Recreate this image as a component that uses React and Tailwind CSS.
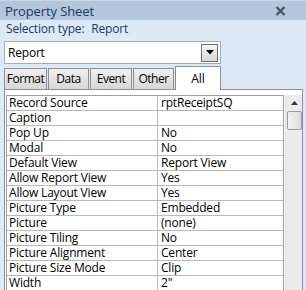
import React from "react";

const rows = [
  ["Record Source", "rptReceiptSQ"],
  ["Caption", ""],
  ["Pop Up", "No"],
  ["Modal", "No"],
  ["Default View", "Report View"],
  ["Allow Report View", "Yes"],
  ["Allow Layout View", "Yes"],
  ["Picture Type", "Embedded"],
  ["Picture", "(none)"],
  ["Picture Tiling", "No"],
  ["Picture Alignment", "Center"],
  ["Picture Size Mode", "Clip"],
  ["Width", "2\""],
];

const tabs = [
  ["Format", "w-[43px]"],
  ["Data", "w-[41px]"],
  ["Event", "w-[42px]"],
  ["Other", "w-[41px]"],
];

export default function App() {
  return (
    <div
      className="w-[306px] h-[290px] overflow-hidden bg-[#dde9f7] text-[12px] leading-[14px]"
      style={{ fontFamily: "'Open Sans', 'Noto Sans', sans-serif" }}
    >
      {/* Title bar */}
      <div className="h-[20px] bg-[#b3c6dc] border-t border-[#c9d6e6] flex items-center justify-between pl-[5px] pr-[20px]">
        <span className="text-[13px] leading-[16px] text-[#1e395b] tracking-[-0.1px]">Property Sheet</span>
        <svg width="11" height="10" viewBox="0 0 11 10">
          <path d="M1.5 1 L9.5 9 M9.5 1 L1.5 9" stroke="#4a5560" strokeWidth="2.4" />
        </svg>
      </div>
      {/* Selection type */}
      <div className="h-[18px] flex items-center pl-[6px] text-[#1e395b] tracking-[-0.2px]">
        <span>Selection type:</span>
        <span className="ml-[7px]">Report</span>
      </div>
      {/* Dropdown */}
      <div className="mt-[3px] ml-[4px] w-[217px] h-[23px] bg-white border border-[#a5acb5] flex items-center justify-between pl-[3px] pr-[2px]">
        <span className="text-black tracking-[-0.2px]">Report</span>
        <div className="w-[17px] h-[18px] border border-[#6f6f6f] bg-gradient-to-b from-[#f4f4f4] to-[#d9d9d9] flex items-center justify-center">
          <svg width="8" height="5" viewBox="0 0 8 5">
            <path d="M0 0 H8 L4 4.5 Z" fill="#000" />
          </svg>
        </div>
      </div>
      {/* Tabs */}
      <div className="mt-[3px] ml-[4px] h-[22px] flex items-end relative z-10">
        {tabs.map(([t, w]) => (
          <div
            key={t}
            className={`${w} h-[21px] mr-[1px] border border-b-0 border-[#8e8f8f] bg-gradient-to-b from-[#f0f0f0] to-[#d7d7d7] flex items-center justify-center text-black tracking-[-0.5px]`}
          >
            {t}
          </div>
        ))}
        <div className="w-[46px] h-[24px] -mb-[1px] border border-b-0 border-[#8e8f8f] bg-white flex items-start pt-[5px] justify-center text-black">
          All
        </div>
      </div>
      {/* Panel */}
      <div className="ml-[4px] w-[299px] h-[220px] bg-white border border-[#8e8f8f] pt-[5px] pl-[1px] flex">
        <div className="w-[278px] border-l border-t border-r border-[#a0a0a0]">
          {rows.map(([k, v]) => (
            <div key={k} className="h-[15px] flex border-b border-[#b9b9b9]">
              <div className="w-[151px] border-r border-[#b9b9b9] pl-[2px] flex items-center text-black tracking-[-0.2px]">
                {k}
              </div>
              <div className="flex-1 pl-[3px] flex items-center text-black tracking-[-0.2px]">{v}</div>
            </div>
          ))}
        </div>
        <div className="ml-[1px] w-[17px] bg-[#ececec] border-l border-[#e0e0e0] flex flex-col items-center">
          <div className="h-[16px] flex items-center justify-center">
            <svg width="7" height="4" viewBox="0 0 7 4">
              <path d="M0 4 H7 L3.5 0 Z" fill="#333" />
            </svg>
          </div>
          <div className="w-[15px] h-[19px] border border-[#9a9a9a] rounded-[2px] bg-gradient-to-r from-[#f3f3f3] to-[#dcdcdc]" />
        </div>
      </div>
    </div>
  );
}
